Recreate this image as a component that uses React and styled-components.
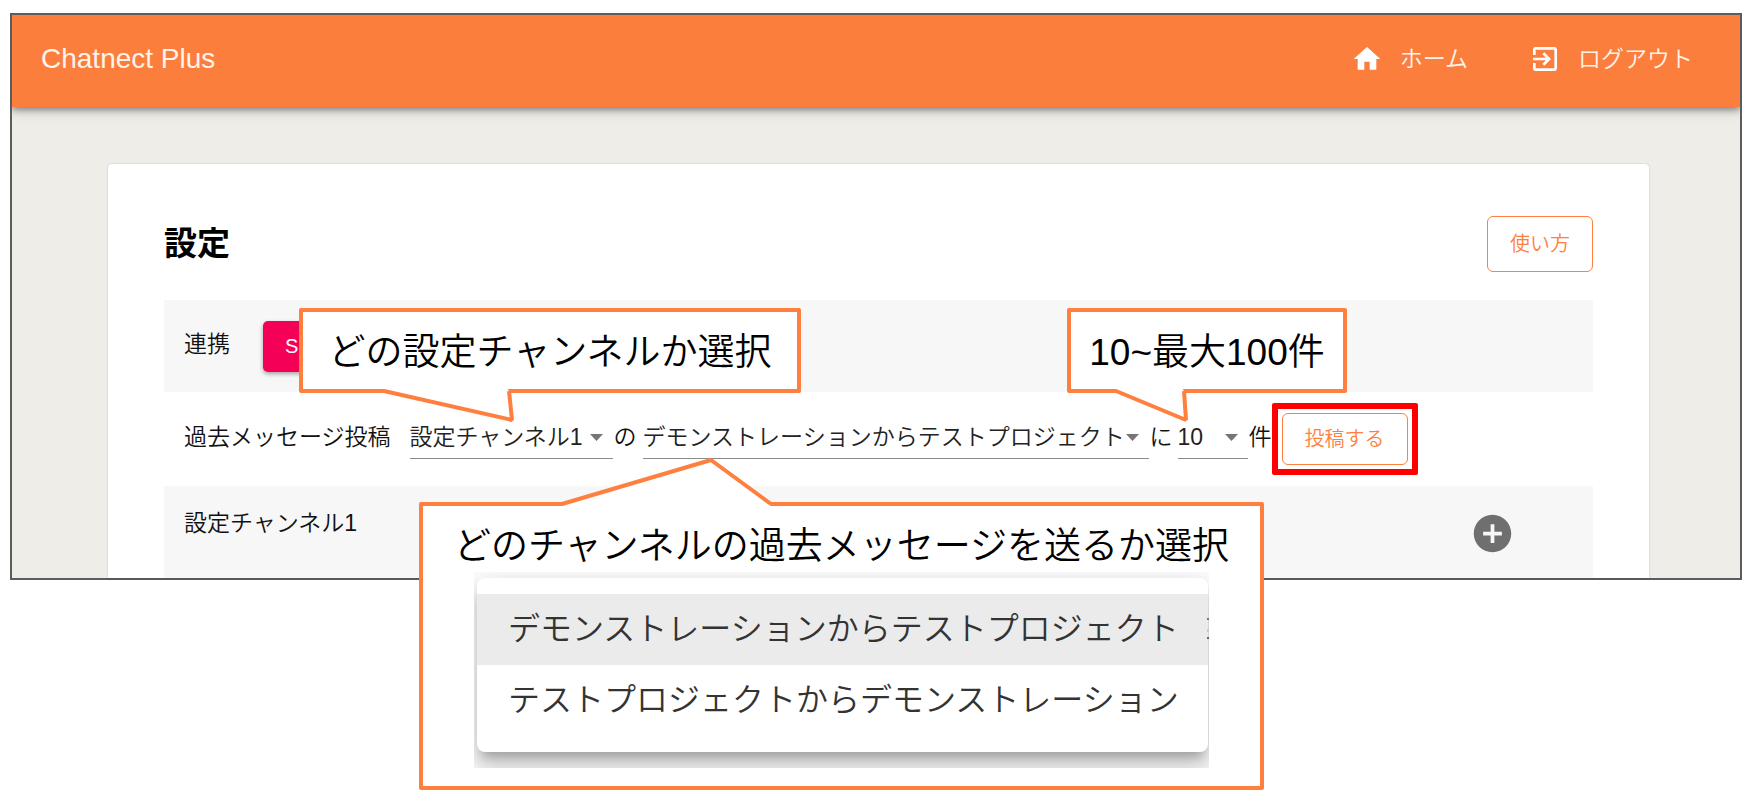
import React, { useState } from 'react';
import styled, { createGlobalStyle } from 'styled-components';
import { MdHome, MdExitToApp, MdAddCircle } from 'react-icons/md';

const ORANGE = '#ff7f3e';

const GlobalStyle = createGlobalStyle`
  * {
    box-sizing: border-box;
  }

  body {
    margin: 0;
    background: #fff;
    color: #000;
    font-family: 'Liberation Sans', 'Noto Sans CJK JP', sans-serif;
    font-size: 23px;
    font-weight: 350;
    line-height: 32px;
  }

  button,
  select {
    font-family: inherit;
    font-weight: inherit;
  }
`;

const Page = styled.div`
  position: relative;
  min-height: 100vh;
  padding: 13px 11px 10px 10px;
`;

const Screen = styled.div`
  border: 2px solid #5c5c5c;
  background: #eeede8;
`;

const Header = styled.header`
  position: relative;
  display: flex;
  justify-content: space-between;
  align-items: center;
  height: 92px;
  padding: 0 47px 4px 29px;
  background: #fc7e3d;
  color: #fff3ec;
  clip-path: inset(0 0 -20px 0);
  box-shadow: 0 3px 6px rgba(0, 0, 0, 0.35), 0 5px 12px rgba(0, 0, 0, 0.15);
`;

const Brand = styled.div`
  font-size: 28px;
`;

const Nav = styled.nav`
  display: flex;
  gap: 61px;
`;

const NavLink = styled.a`
  display: flex;
  align-items: center;
  gap: 17px;
  color: inherit;
  text-decoration: none;

  svg {
    width: 32px;
    height: 32px;
    color: #fff;
  }
`;

const Card = styled.main`
  margin: 57px 91px 0 96px;
  padding: 52px 56px 0;
  background: #fff;
  border-radius: 4px 4px 0 0;
  box-shadow: 0 0 2px rgba(0, 0, 0, 0.2);
`;

const CardHead = styled.div`
  display: flex;
  justify-content: space-between;
  align-items: center;
  margin-bottom: 28px;
`;

const Title = styled.h1`
  margin: 0;
  font-size: 33px;
  line-height: 40px;
  font-weight: 700;
`;

const OutlineButton = styled.button`
  height: ${props => props.height}px;
  padding: 0 22px 3px;
  border: 1px solid ${ORANGE};
  border-radius: 6px;
  background: #fff;
  color: ${ORANGE};
  font-size: 20px;
  cursor: pointer;
`;

const Row = styled.section`
  display: flex;
  align-items: center;
  min-height: ${props => props.height || 92}px;
  padding-left: 20px;
  background: ${props => (props.shaded ? '#f7f7f7' : '#fff')};
  color: #111;
`;

const Label = styled.div`
  padding-bottom: ${props => props.lift || 4}px;
  margin-right: ${props => props.gap || 0}px;
  white-space: nowrap;
`;

const LinkButton = styled.button`
  width: 128px;
  height: 51px;
  padding: 0 22px;
  border: none;
  border-radius: 5px;
  background: #f50057;
  color: #fff;
  font-size: 20px;
  text-align: left;
  box-shadow: 0 2px 4px rgba(0, 0, 0, 0.35);
  cursor: pointer;
`;

const Sentence = styled.div`
  display: flex;
  align-items: center;
  padding-bottom: 4px;
  white-space: nowrap;
`;

const Particle = styled.span`
  margin: 0 ${props => props.gap || 0}px 0 1px;
`;

const SelectBox = styled.div`
  position: relative;
  width: ${props => props.width}px;

  svg {
    position: absolute;
    right: 10px;
    top: 19px;
    pointer-events: none;
  }
`;

const Select = styled.select`
  appearance: none;
  display: block;
  width: 100%;
  height: 44px;
  padding: 0;
  border: none;
  border-bottom: 1px solid #8c8c8c;
  border-radius: 0;
  background: transparent;
  color: #222;
  font-size: 23px;
  cursor: pointer;
`;

const Highlight = styled.div`
  padding: 4px;
  border: 6px solid #f00;
  border-radius: 2px;
`;

const AddButton = styled.button`
  display: flex;
  margin: 2px 78px 0 auto;
  padding: 0;
  border: none;
  background: none;
  color: #6f6f6f;
  cursor: pointer;

  svg {
    width: 45px;
    height: 45px;
  }
`;

const Callout = styled.div`
  position: absolute;
  left: ${props => props.left}px;
  top: ${props => props.top}px;
  width: ${props => props.width}px;
  padding: 23px 0 18px;
  border: 4px solid ${ORANGE};
  border-radius: 2px;
  background: #fff;
`;

const CalloutText = styled.p`
  margin: 0;
  font-size: 37px;
  line-height: 36px;
  text-align: center;
  white-space: nowrap;
`;

const TailSvg = styled.svg`
  position: absolute;
  left: -4px;
  top: -4px;
  overflow: visible;
  pointer-events: none;
`;

const MenuArea = styled.div`
  position: relative;
  margin: 7px 51px 0;
  padding: 6px 1px 16px 3px;
  overflow: hidden;
`;

const Menu = styled.ul`
  margin: 0;
  padding: 16px 0;
  list-style: none;
  border-radius: 8px;
  background: #fff;
  box-shadow: 0 10px 10px -6px rgba(0, 0, 0, 0.2), 0 16px 20px 2px rgba(0, 0, 0, 0.14),
    0 6px 28px 4px rgba(0, 0, 0, 0.12);
`;

const MenuItem = styled.li`
  padding-left: 31px;
  background: ${props => (props.selected ? '#ebebeb' : '#fff')};
  color: #333;
  font-size: 32px;
  line-height: 71px;
  white-space: nowrap;
`;

const EdgeMarks = styled.svg`
  position: absolute;
  top: 46px;
  right: 0;
`;

const channels = ['設定チャンネル1'];
const routes = ['デモンストレーションからテストプロジェクト', 'テストプロジェクトからデモンストレーション'];
const counts = ['10', '50', '100'];

function Tail({ from, tip, to, inner }) {
  return (
    <TailSvg width="10" height="10" aria-hidden="true">
      <polygon
        points={`${from[0] + 2},${inner} ${from} ${tip} ${to} ${to[0] - 2},${inner}`}
        fill="#fff"
      />
      <polyline points={`${from} ${tip} ${to}`} fill="none" stroke={ORANGE} strokeWidth="4" strokeLinejoin="bevel" />
    </TailSvg>
  );
}

function Dropdown({ label, width, options, value, onChange }) {
  return (
    <SelectBox width={width}>
      <Select aria-label={label} value={value} onChange={(e) => onChange(e.target.value)}>
        {options.map((o) => (
          <option key={o} value={o}>{o}</option>
        ))}
      </Select>
      <svg width="13" height="7" viewBox="0 0 26 14" aria-hidden="true">
        <path d="M0 0h26L13 14z" fill="#757575" />
      </svg>
    </SelectBox>
  );
}

function App() {
  const [channel, setChannel] = useState(channels[0]);
  const [route, setRoute] = useState(routes[0]);
  const [count, setCount] = useState(counts[0]);

  return (
    <Page>
      <GlobalStyle />
      <Screen>
        <Header>
          <Brand>Chatnect Plus</Brand>
          <Nav>
            <NavLink href="#home"><MdHome />ホーム</NavLink>
            <NavLink href="#logout"><MdExitToApp />ログアウト</NavLink>
          </Nav>
        </Header>

        <Card>
          <CardHead>
            <Title>設定</Title>
            <OutlineButton height={56}>使い方</OutlineButton>
          </CardHead>

          <Row shaded>
            <Label gap={33}>連携</Label>
            <LinkButton>S</LinkButton>
          </Row>

          <Row height={94}>
            <Label gap={19}>過去メッセージ投稿</Label>
            <Sentence>
              <Dropdown label="設定チャンネル" width={203} options={channels} value={channel} onChange={setChannel} />
              <Particle gap={6}>の</Particle>
              <Dropdown label="投稿元" width={506} options={routes} value={route} onChange={setRoute} />
              <Particle gap={5}>に</Particle>
              <Dropdown label="件数" width={70} options={counts} value={count} onChange={setCount} />
              <Particle>件</Particle>
            </Sentence>
            <Highlight>
              <OutlineButton height={52}>投稿する</OutlineButton>
            </Highlight>
          </Row>

          <Row shaded>
            <Label lift={19}>設定チャンネル1</Label>
            <AddButton aria-label="追加"><MdAddCircle /></AddButton>
          </Row>
        </Card>
      </Screen>

      <Callout left={299} top={308} width={502}>
        <CalloutText>どの設定チャンネルか選択</CalloutText>
        <Tail from={[85, 83]} tip={[213, 112]} to={[210, 83]} inner={80} />
      </Callout>

      <Callout left={1067} top={308} width={280}>
        <CalloutText>10~最大100件</CalloutText>
        <Tail from={[49, 83]} tip={[119, 112]} to={[117, 83]} inner={80} />
      </Callout>

      <Callout left={419} top={502} width={845}>
        <CalloutText>どのチャンネルの過去メッセージを送るか選択</CalloutText>
        <MenuArea>
          <Menu>
            <MenuItem selected>デモンストレーションからテストプロジェクト</MenuItem>
            <MenuItem>テストプロジェクトからデモンストレーション</MenuItem>
          </Menu>
          <EdgeMarks width="2" height="22" aria-hidden="true">
            <rect width="2" height="2" fill="#777" />
            <rect y="11" width="2" height="3" fill="#a5d2f3" />
            <rect y="19" width="2" height="2" fill="#666" />
          </EdgeMarks>
        </MenuArea>
        <Tail from={[143, 2]} tip={[292, -42]} to={[352, 2]} inner={5} />
      </Callout>
    </Page>
  );
}

export default App;
